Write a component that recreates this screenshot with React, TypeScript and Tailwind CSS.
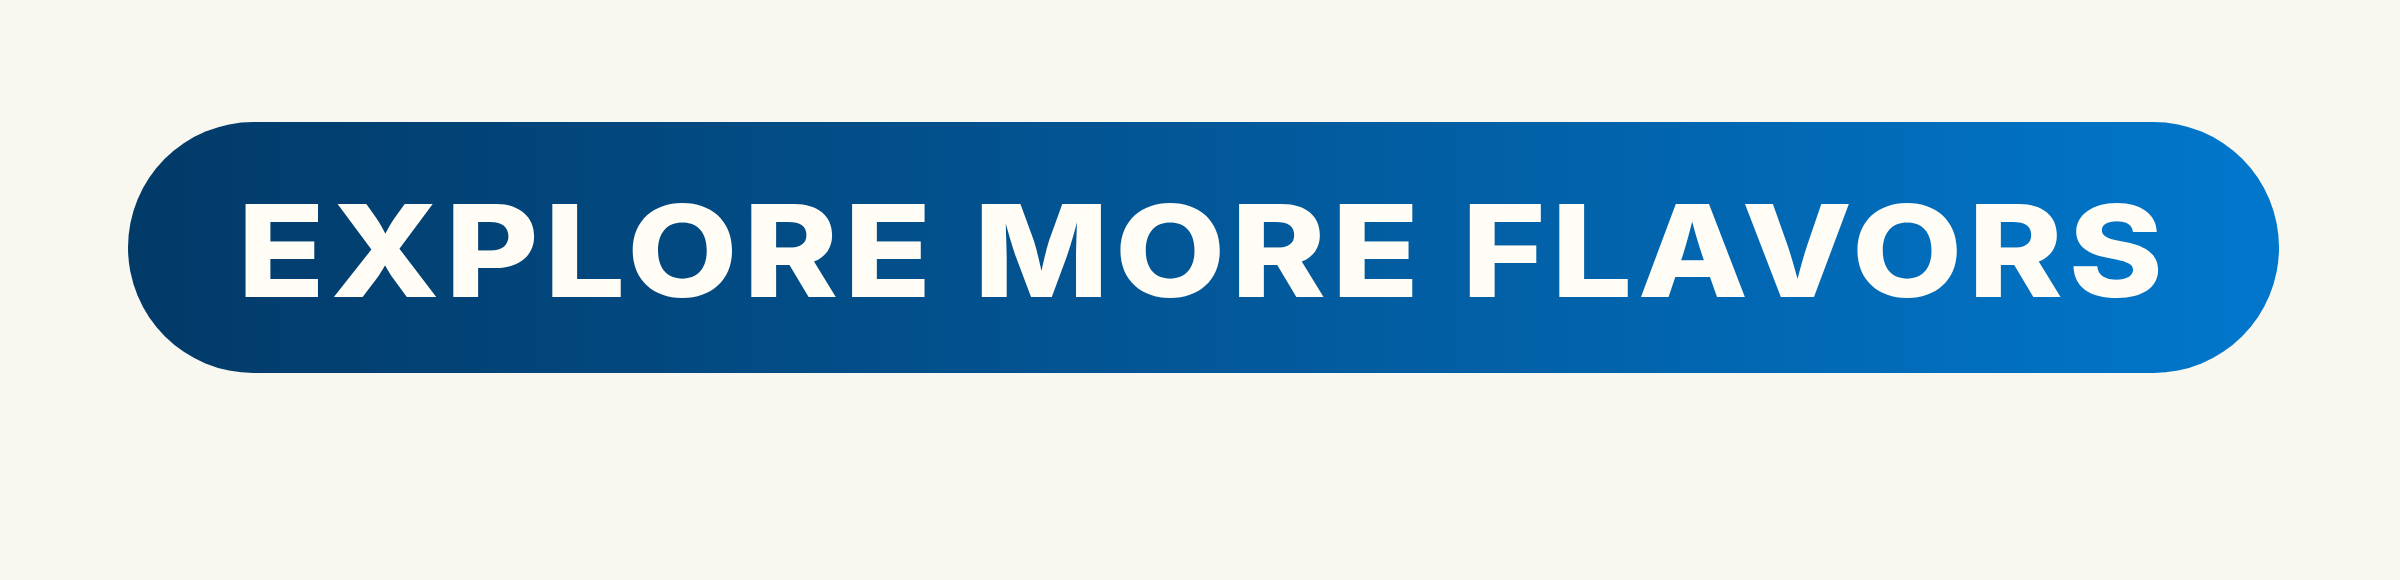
import React from "react";

export default function App() {
  return (
    <div className="w-[2400px] h-[580px] bg-[#f8f7f0] flex items-start justify-center pt-[122px]">
      <button
        type="button"
        className="w-[2151px] h-[251px] rounded-full bg-gradient-to-r from-[#023a68] to-[#0177cc] flex items-center justify-center pt-[6px] ml-[7px]"
      >
        <span
          className="block text-[128px] leading-none font-extrabold tracking-[5px] whitespace-nowrap text-[#fffdf5] scale-x-[1.12] font-['Inter',sans-serif]"
        >
          EXPLORE MORE FLAVORS
        </span>
      </button>
    </div>
  );
}
